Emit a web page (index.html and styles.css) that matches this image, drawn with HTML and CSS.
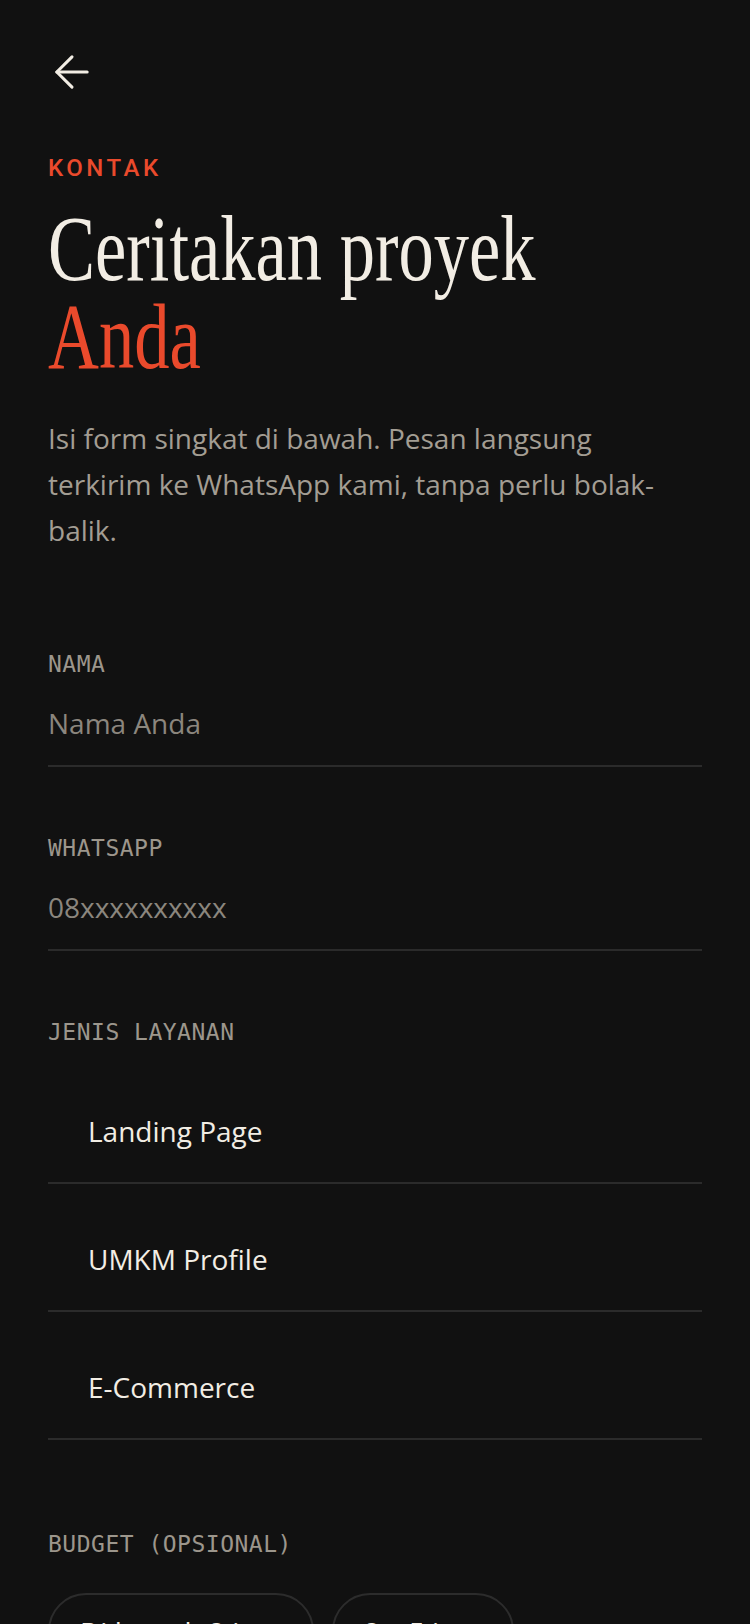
FILE: index.html
```html
<!DOCTYPE html>
<html lang="id">
<head>
    <meta charset="UTF-8">
    <meta name="viewport" content="width=device-width, initial-scale=1.0">
    <title>Kontak</title>
    <link rel="stylesheet" href="styles.css">
</head>
<body>
    <div class="page">
        <a href="#" class="back" aria-label="Kembali">
            <svg viewBox="0 0 24 24" width="52" height="52" fill="none" stroke="currentColor" stroke-width="1.4" stroke-linecap="round" stroke-linejoin="round">
                <path d="M19 12H5"/>
                <path d="M12 19l-7-7 7-7"/>
            </svg>
        </a>

        <div class="eyebrow">KONTAK</div>
        <h1 class="title">Ceritakan proyek<br><span class="accent">Anda</span></h1>
        <p class="intro">Isi form singkat di bawah. Pesan langsung terkirim ke WhatsApp kami, tanpa perlu bolak-balik.</p>

        <form class="form">
            <div class="field">
                <label class="field-label" for="nama">NAMA</label>
                <input type="text" id="nama" name="nama" placeholder="Nama Anda">
            </div>

            <div class="field">
                <label class="field-label" for="wa">WHATSAPP</label>
                <input type="tel" id="wa" name="wa" placeholder="08xxxxxxxxxx">
            </div>

            <div class="field field-options">
                <span class="field-label">JENIS LAYANAN</span>
                <div class="options">
                    <label class="option"><input type="radio" name="layanan" value="landing"><span>Landing Page</span></label>
                    <label class="option"><input type="radio" name="layanan" value="umkm"><span>UMKM Profile</span></label>
                    <label class="option"><input type="radio" name="layanan" value="ecommerce"><span>E-Commerce</span></label>
                </div>
            </div>

            <div class="field">
                <span class="field-label">BUDGET (OPSIONAL)</span>
                <div class="pills">
                    <button type="button" class="pill">Di bawah 2 juta</button>
                    <button type="button" class="pill">2 – 5 juta</button>
                </div>
            </div>
        </form>
    </div>
</body>
</html>
```

FILE: styles.css
```css
body {
    margin: 0;
    background-color: #111111;
    color: #f2ede4;
    font-family: 'Open Sans', 'Noto Sans', sans-serif;
}

.page {
    padding: 46px 48px 80px;
}

.back {
    display: block;
    width: 52px;
    height: 52px;
    margin-left: -2px;
    color: #f2ede4;
}

.back svg {
    display: block;
}

.eyebrow {
    margin-top: 58px;
    font-family: 'Roboto', sans-serif;
    font-weight: 500;
    font-size: 24px;
    line-height: 24px;
    letter-spacing: 3.5px;
    color: #ea4a2c;
}

.title {
    margin: 24px 0 0;
    font-family: 'Liberation Serif', serif;
    font-weight: 400;
    font-size: 94px;
    line-height: 88px;
    color: #f2ede4;
    transform: scaleX(0.75);
    transform-origin: left top;
    white-space: nowrap;
}

.accent {
    color: #ea4a2c;
}

.intro {
    margin: 35px 0 0;
    max-width: 620px;
    font-size: 28px;
    line-height: 46px;
    color: #a39d93;
}

.form {
    margin-top: 97px;
    display: flex;
    flex-direction: column;
    gap: 67px;
}

.field-label {
    display: block;
    font-family: 'DejaVu Sans Mono', 'Liberation Mono', monospace;
    font-size: 23px;
    line-height: 28px;
    letter-spacing: 0.5px;
    color: #9c968c;
}

.field input[type="text"],
.field input[type="tel"] {
    display: block;
    width: 100%;
    box-sizing: border-box;
    margin-top: 13px;
    padding: 14px 0 24px;
    border: none;
    border-bottom: 2px solid #2b2b2b;
    background: transparent;
    font-family: 'Open Sans', sans-serif;
    font-size: 28px;
    line-height: 36px;
    color: #f2ede4;
    outline: none;
}

.field input::placeholder {
    color: #8b867e;
    opacity: 1;
}

.field-options {
    margin-bottom: 23px;
}

.options {
    margin-top: 10px;
    display: flex;
    flex-direction: column;
}

.option {
    display: block;
    padding: 57px 0 33px 40px;
    border-bottom: 2px solid #2b2b2b;
    font-size: 28px;
    line-height: 36px;
    color: #f2ede4;
    cursor: pointer;
}

.option input {
    display: none;
}

.pills {
    margin-top: 35px;
    display: flex;
    gap: 18px;
}

.pill {
    padding: 19px 30px;
    border: 2px solid #2c2c2c;
    border-radius: 38px;
    background: transparent;
    font-family: 'Open Sans', sans-serif;
    font-size: 28px;
    line-height: 36px;
    color: #f2ede4;
    cursor: pointer;
}
```
